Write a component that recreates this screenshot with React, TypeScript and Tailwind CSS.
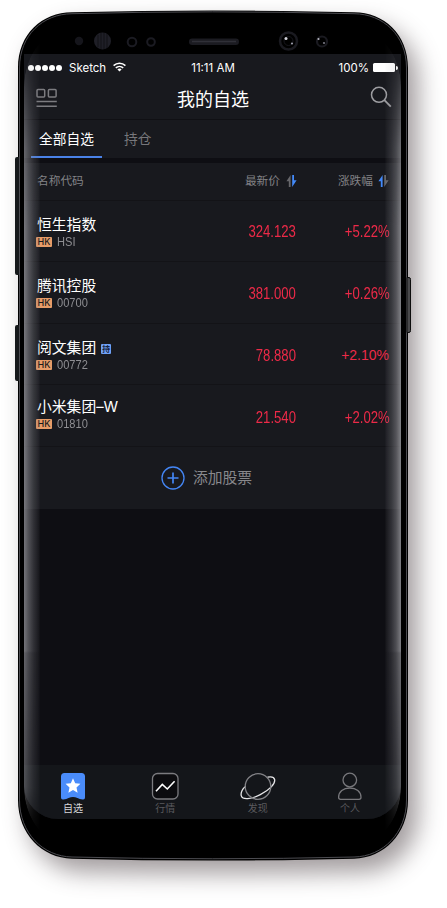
import type { ReactNode } from "react";
import clsx from "clsx";

type Stock = {
  name: string;
  code: string;
  price: string;
  change: string;
  held?: boolean;
  row: string;
  figures: string;
  wideChange?: boolean;
};

const stocks: Stock[] = [
  { name: "恒生指数", code: "HSI", price: "324.123", change: "+5.22%", row: "h-[61px] pt-[14px]", figures: "pt-[7px]" },
  { name: "腾讯控股", code: "00700", price: "381.000", change: "+0.26%", row: "h-[62px] pt-[14px]", figures: "pt-[8px]" },
  { name: "阅文集团", code: "00772", price: "78.880", change: "+2.10%", held: true, row: "h-[61px] pt-[14px]", figures: "pt-[8px]", wideChange: true },
  { name: "小米集团–W", code: "01810", price: "21.540", change: "+2.02%", row: "h-[62px] pt-[12px]", figures: "pt-[11px]" },
];

// condensed look for digits
const narrow = "font-['Liberation_Sans',sans-serif] scale-x-[0.82]";

function SortIcon({ active, className }: { active: "up" | "down"; className?: string }) {
  return (
    <svg width="11" height="12" viewBox="0 0 11 12" className={className}>
      <path d="M4.6 0v12H2.8V6.200H.4z" fill={active === "up" ? "#4389f8" : "#66666a"} />
      <path d="M6.200 12V0H8v5.200h2.600z" fill={active === "down" ? "#4389f8" : "#66666a"} />
    </svg>
  );
}

function StatusBar() {
  return (
    <div className="h-[27px] pl-[4px] pr-[3px] grid grid-cols-[1fr_auto_1fr] items-center text-[11.5px] leading-none text-white">
      <div className="flex items-center">
        <div className="flex gap-[1px]">
          {[0, 1, 2, 3, 4].map(i => (
            <span key={i} className="size-[6px] rounded-full bg-white" />
          ))}
        </div>
        <span className="ml-[7px] pt-[2px]">Sketch</span>
        <svg width="13" height="10" viewBox="0 0 13 10" className="ml-[7px] mb-[2px]" fill="none" stroke="#fff" strokeWidth="1.5">
          <path d="M.6 3.6C4 .3 9 .3 12.4 3.6" />
          <path d="M2.8 5.9c2.1-2 5.3-2 7.4 0" />
          <path d="M4.4 7.4c1.2-1.1 3-1.1 4.2 0L6.5 9.6z" fill="#fff" stroke="none" />
        </svg>
      </div>
      <span className="pt-[3px]">11:11 AM</span>
      <div className="flex items-center justify-end">
        <span className="pt-[2px]">100%</span>
        <span className="ml-[4px] w-[22px] h-[9px] rounded-[1.5px] bg-white" />
        <span className="ml-[1px] w-[2px] h-[4px] rounded-r bg-white" />
      </div>
    </div>
  );
}

function TitleBar() {
  return (
    <header className="h-[39px] pl-[12px] pr-[9px] flex items-start justify-between border-b border-[#101014]">
      <svg width="22" height="20" viewBox="0 0 22 20" className="mt-[7px]" fill="none" stroke="#7c7c80" strokeWidth="1.5">
        <rect x="1" y="1.4" width="7.7" height="7.6" rx="1" />
        <rect x="12.4" y="1.4" width="7.7" height="7.6" rx="1" />
        <path d="M.5 13.6h20.3M.5 18.2h20.3" />
      </svg>
      <h1 className="mt-[5px] mr-[2px] text-[18px] leading-[28px] text-white">我的自选</h1>
      <svg width="22" height="22" viewBox="0 0 22 22" className="mt-[5px]" fill="none" stroke="#9d9da1" strokeWidth="1.5">
        <circle cx="9" cy="8.8" r="7.5" />
        <path d="M14.400 14.200l6.400 6.400" strokeWidth="1.9" />
      </svg>
    </header>
  );
}

function StockRow({ stock }: { stock: Stock }) {
  return (
    <div className={clsx("pl-[13px] pr-[11px] flex border-b border-[#131317] text-[#ed2a48]", stock.row)}>
      <div className="w-[132px]">
        <div className="flex items-center">
          <span className="text-[14.8px] leading-[21px] text-white whitespace-nowrap">{stock.name}</span>
          {stock.held && (
            <span className="ml-[5px] size-[10px] rounded-[1px] bg-[#6fa1f7] text-[8px] leading-[10px] font-bold text-[#15223c] text-center overflow-hidden">
              持
            </span>
          )}
        </div>
        <div className="-mt-px flex items-center h-[14px]">
          <span className="-ml-[1px] w-[16px] h-[10px] rounded-[1px] bg-[#e79c68] text-[9px] leading-[10.5px] text-center font-medium text-[#1a1a1c]">HK</span>
          <span className={clsx(narrow, "origin-left ml-[5px] text-[13.5px] leading-[14px] text-[#8e8e92]")}>{stock.code}</span>
        </div>
      </div>
      <div className={clsx("w-[127px] flex items-start justify-end", stock.figures)}>
        <span className={clsx(narrow, "origin-right text-[16px] leading-[20px]")}>{stock.price}</span>
      </div>
      <div className={clsx("flex-1 flex items-start justify-end", stock.figures)}>
        {stock.wideChange ? (
          <span className="pr-[1px] font-['Liberation_Sans',sans-serif] text-[14px] leading-[18px]">{stock.change}</span>
        ) : (
          <span className={clsx(narrow, "origin-right text-[16px] leading-[20px]")}>{stock.change}</span>
        )}
      </div>
    </div>
  );
}

function NavItem({ label, active, children }: { label: string; active?: boolean; children: ReactNode }) {
  return (
    <div className="w-[40px] flex flex-col items-center">
      {children}
      <span className={clsx("text-[10px] leading-[15px]", active ? "text-[#d8d8da]" : "text-[#5a5a5e]")}>{label}</span>
    </div>
  );
}

function BottomNav() {
  return (
    <nav className="h-[54px] pl-[29px] pr-[31px] pt-[7px] flex justify-between bg-[#14161a]">
      <NavItem label="自选" active>
        <svg width="36" height="29" viewBox="0 0 36 29">
          <path d="M9.500 1h17a3.500 3.500 0 0 1 3.500 3.500V25.500q0 2.500-2.500 2-3-.500-5-1.500-4.500-2-9 0-2 1-5 1.500-2.500.500-2.500-2V4.500A3.500 3.500 0 0 1 9.500 1z" fill="#4a8cfa" />
          <path d="M18 6.300l2.200 4.900 5.200.6-3.900 3.600 1.100 5.300-4.600-2.700-4.600 2.700 1.100-5.300-3.900-3.600 5.200-.6z" fill="#fff" />
        </svg>
      </NavItem>
      <NavItem label="行情">
        <svg width="36" height="29" viewBox="0 0 36 29" fill="none">
          <rect x="5.500" y="1.500" width="25.500" height="25.500" rx="5" fill="#0c0c0f" stroke="#7b7b7f" strokeWidth="1.3" />
          <path d="M9 19.200l6.300-6.800 5 4.600 7.300-7.700" stroke="#fff" strokeWidth="1.600" />
        </svg>
      </NavItem>
      <NavItem label="发现">
        <svg width="36" height="29" viewBox="0 0 36 29" fill="none" strokeWidth="1.300" className="ml-[1px]">
          <path d="M27.500 5.200c3.500-.8 6.500-.1 7.100 2.300.9 4.200-5 10.400-14.300 15.100C11 27.500 2.500 27.900 1.300 23.900c-.9-3 1.200-7.400 4.500-9.600" stroke="#e6e6e8" />
          <circle cx="18" cy="14.500" r="12.800" stroke="#828286" />
        </svg>
      </NavItem>
      <NavItem label="个人">
        <svg width="36" height="29" viewBox="0 0 36 29" fill="none" stroke="#77777b" strokeWidth="1.300">
          <circle cx="17.800" cy="8" r="6.800" />
          <path d="M8.600 27.300c-1.300 0-2-.7-2-2C6.600 19.800 11.300 16 17.800 16s11.200 3.800 11.200 9.300c0 1.300-.7 2-2 2z" />
        </svg>
      </NavItem>
    </nav>
  );
}

function Sensors() {
  return (
    <svg width="377" height="43" viewBox="0 0 377 43" className="block" fill="none">
      <circle cx="55" cy="30" r="4.200" fill="#15151b" />
      <circle cx="78.500" cy="30" r="8.500" fill="#1f1f27" />
      <path d="M74 24v12M77 22v16M80 22v16M83 23v14" stroke="#121217" strokeWidth="1" />
      <circle cx="108" cy="31" r="4.300" stroke="#1b1b22" strokeWidth="2" />
      <circle cx="127" cy="31" r="3.800" stroke="#1b1b22" strokeWidth="2" />
      <rect x="165" y="27.500" width="50" height="6.500" rx="3.200" fill="#1b1b21" />
      <path d="M168 30.500h44" stroke="#303038" strokeWidth="1.500" />
      <circle cx="264.500" cy="30" r="8.500" stroke="#1a1a20" strokeWidth="2.500" />
      <circle cx="264.500" cy="30" r="4.500" stroke="#17171d" strokeWidth="1" />
      <circle cx="262" cy="27.500" r="1.500" fill="#d2d2da" />
      <circle cx="268" cy="32.500" r="1.100" fill="#9999a6" />
      <circle cx="298" cy="30.500" r="5" stroke="#1a1a20" strokeWidth="2.200" />
      <circle cx="294.500" cy="28" r="1.100" fill="#b5b5bf" />
      <circle cx="300" cy="32" r="1.100" fill="#777783" />
    </svg>
  );
}

// Handset body: slightly bowed top and bottom edges, metal rim, side keys
function Shell() {
  return (
    <svg width="447" height="908" viewBox="0 0 447 908" fill="none" className="absolute inset-0">
      <g className="[filter:drop-shadow(10px_13px_12px_rgba(50,38,42,.46))]">
        <path d="M18 68C18 34 42 12.500 72 12.300Q212 8.500 354 12.300C384 12.500 408 34 408 68V800C408 834 384 858 354 858.700Q212 862.500 72 858.700C42 858 18 834 18 800z" fill="#000" />
      </g>
      <path d="M19.500 68C19.500 35 43 14 72 13.700Q212 10 354 13.700C383 14 406.500 35 406.500 68V800C406.500 833 383 856.500 354 857Q212 860.500 72 857C43 856.500 19.500 833 19.500 800z" stroke="#55555a" strokeWidth=".9" />
      <path d="M15 159q0-2 2-2h2v118h-2q-2 0-2-2zM15 327q0-2 2-2h2v56h-2q-2 0-2-2z" fill="#15181a" />
      <path d="M407 277.500h2q1.500 0 1.500 2v51q0 2-1.500 2h-2z" fill="#4a4a4c" stroke="#0c0c0c" />
    </svg>
  );
}

// Light caught by the curved glass on both sides of the screen
function EdgeGloss() {
  return (
    <div className="absolute left-[24px] top-[27px] w-[377px] h-[820px] rounded-[50px/60px] overflow-hidden pointer-events-none flex justify-between [mask-image:linear-gradient(to_bottom,transparent,rgba(0,0,0,.3)_50px,rgba(0,0,0,.8)_120px,#000_200px,#000_624px,rgba(0,0,0,.85)_626px,rgba(0,0,0,.6)_760px,transparent_812px)]">
      <div className="w-[16px] bg-[linear-gradient(to_right,rgba(165,165,170,.68),rgba(150,150,155,.48)_30%,rgba(130,130,136,.3)_60%,rgba(110,110,116,.1)_95%,transparent)]" />
      <div className="w-[16px] bg-[linear-gradient(to_left,rgba(175,175,180,.7),rgba(150,150,155,.48)_30%,rgba(130,130,136,.3)_60%,rgba(110,110,116,.1)_95%,transparent)]" />
    </div>
  );
}

export default function App() {
  return (
    <main className="relative w-[447px] h-[908px] bg-white overflow-hidden font-['Inter','Noto_Sans_CJK_SC',sans-serif]">
      <Shell />
      <div className="relative w-[401px] pt-[11px] pl-[24px]">
        <Sensors />
        <div className="h-[765px] rounded-b-[34px] overflow-hidden bg-[#0e0e13] flex flex-col">
          <div className="bg-[#18191e]">
            <StatusBar />
            <TitleBar />
            <div className="h-[38px] pl-[7px] flex text-[13.7px] leading-[38px]">
              <div className="w-[71px] text-center text-white border-b-2 border-[#4a82e8]">全部自选</div>
              <div className="ml-[22px] text-[#77777b]">持仓</div>
            </div>
          </div>
          <div className="h-[5px] bg-[#0e0e13]" />
          <div className="bg-[#18191e]">
            <div className="h-[38px] pl-[13px] pr-[12px] flex items-center border-b border-[#131317] text-[11.7px] text-[#828286]">
              <span className="w-[132px]">名称代码</span>
              <span className="w-[128px] flex items-center justify-end">最新价<SortIcon active="down" className="ml-[6px]" /></span>
              <span className="flex-1 flex items-center justify-end">涨跌幅<SortIcon active="up" className="ml-[5px]" /></span>
            </div>
            {stocks.map(s => (
              <StockRow key={s.code} stock={s} />
            ))}
            <div className="h-[62px] flex items-center justify-center gap-[8px] pr-[12px]">
              <svg width="24" height="24" viewBox="0 0 24 24" fill="none" stroke="#4486f5">
                <circle cx="12" cy="12" r="11" strokeWidth="1.300" />
                <path d="M12 6.500v11M6.500 12h11" strokeWidth="1.700" />
              </svg>
              <span className="text-[14.8px] text-[#88888c]">添加股票</span>
            </div>
          </div>
          <div className="flex-1" />
          <BottomNav />
        </div>
      </div>
      <EdgeGloss />
    </main>
  );
}
